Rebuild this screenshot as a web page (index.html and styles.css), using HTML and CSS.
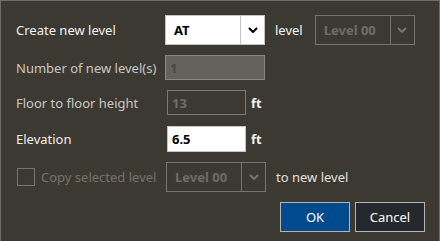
FILE: index.html
```html
<!DOCTYPE html>
<html lang="en">
<head>
  <meta charset="UTF-8" />
  <title>Create new level</title>
  <link rel="stylesheet" href="styles.css">
</head>
<body>
  <div class="dialog">
    <div class="row">
      <label class="label">Create new level</label>
      <div class="combo combo-active">
        <span class="combo-value">AT</span>
        <span class="combo-arrow">
          <svg width="10" height="6" viewBox="0 0 10 6"><path d="M1 1 L5 5 L9 1" fill="none" stroke="#000" stroke-width="2"/></svg>
        </span>
      </div>
      <span class="unit unit-wide">level</span>
      <div class="combo combo-disabled">
        <span class="combo-value">Level 00</span>
        <span class="combo-arrow">
          <svg width="10" height="6" viewBox="0 0 10 6"><path d="M1 1 L5 5 L9 1" fill="none" stroke="#77746e" stroke-width="2"/></svg>
        </span>
      </div>
    </div>

    <div class="row row-short">
      <label class="label label-dim">Number of new level(s)</label>
      <div class="field field-locked">1</div>
    </div>

    <div class="row row-short">
      <label class="label label-dim">Floor to floor height</label>
      <div class="field field-small field-disabled">13</div>
      <span class="unit">ft</span>
    </div>

    <div class="row row-mid">
      <label class="label">Elevation</label>
      <div class="field field-small field-white">6.5</div>
      <span class="unit">ft</span>
    </div>

    <div class="row">
      <div class="check-wrap">
        <span class="checkbox"></span>
        <span class="check-label">Copy selected level</span>
      </div>
      <div class="combo combo-disabled">
        <span class="combo-value">Level 00</span>
        <span class="combo-arrow">
          <svg width="10" height="6" viewBox="0 0 10 6"><path d="M1 1 L5 5 L9 1" fill="none" stroke="#77746e" stroke-width="2"/></svg>
        </span>
      </div>
      <span class="unit unit-wide unit-light">to new level</span>
    </div>

    <div class="buttons">
      <button class="btn btn-ok">OK</button>
      <button class="btn btn-cancel">Cancel</button>
    </div>
  </div>
</body>
</html>
```

FILE: styles.css
```css
body {
  margin: 0;
  padding: 0;
  background: #3c3933;
  font-family: 'Noto Sans', 'Open Sans', sans-serif;
  font-size: 13px;
  color: #f2f2f2;
}

.dialog {
  box-sizing: border-box;
  width: 440px;
  height: 241px;
  border: 1px solid #6f6c67;
  border-bottom: none;
  padding: 14px 14px 0 15px;
  display: flex;
  flex-direction: column;
  gap: 10px;
}

.row {
  display: flex;
  align-items: center;
  height: 30px;
}

.row-short {
  height: 25px;
}

.row-mid {
  height: 26px;
  margin-top: 1px;
}

.label {
  width: 149px;
  flex: none;
  color: #f0f0f0;
}

.label-dim {
  color: #c9c7c3;
}

.combo {
  box-sizing: border-box;
  width: 100px;
  height: 30px;
  display: flex;
  align-items: stretch;
  font-weight: 700;
}

.combo-value {
  flex: 1;
  display: flex;
  align-items: center;
  padding-left: 8px;
}

.combo-arrow {
  width: 23px;
  display: flex;
  align-items: center;
  justify-content: center;
}

.combo-active {
  background: #fff;
  border: 1px solid #c4c4c4;
  color: #000;
}

.combo-active .combo-arrow {
  border-left: 1px solid #c4c4c4;
}

.combo-disabled {
  border: 1px solid #77746e;
  color: #6f6c66;
}

.combo-disabled .combo-arrow {
  border-left: 1px solid #77746e;
}

.unit {
  margin-left: 5px;
  font-weight: 700;
  color: #f2f2f2;
}

.unit-wide {
  margin-left: 10px;
  margin-right: 12px;
  font-weight: 400;
}

.unit-light {
  color: #e2e0dc;
}

.field {
  box-sizing: border-box;
  height: 100%;
  width: 100px;
  display: flex;
  align-items: center;
  padding-left: 4px;
  font-weight: 700;
}

.field-small {
  width: 79px;
  margin-left: 2px;
}

.field-locked {
  background: #65625b;
  border: 1px solid #8b8883;
  color: #4a4741;
}

.field-disabled {
  border: 1px solid #7c7974;
  color: #6f6c66;
}

.field-white {
  background: #fff;
  border: 1px solid #c4c4c4;
  color: #000;
}

.check-wrap {
  width: 150px;
  flex: none;
  display: flex;
  align-items: center;
  gap: 6px;
  color: #75726c;
}

.checkbox {
  box-sizing: border-box;
  width: 18px;
  height: 18px;
  border: 1px solid #77746e;
  margin-left: 1px;
}

.buttons {
  display: flex;
  justify-content: flex-end;
  gap: 5px;
}

.btn {
  box-sizing: border-box;
  width: 70px;
  height: 30px;
  border: 1px solid #b4b4b4;
  font-family: inherit;
  font-size: 13px;
  color: #fff;
  padding: 0;
}

.btn-ok {
  background: #014a8e;
}

.btn-cancel {
  background: #25292d;
}
```
